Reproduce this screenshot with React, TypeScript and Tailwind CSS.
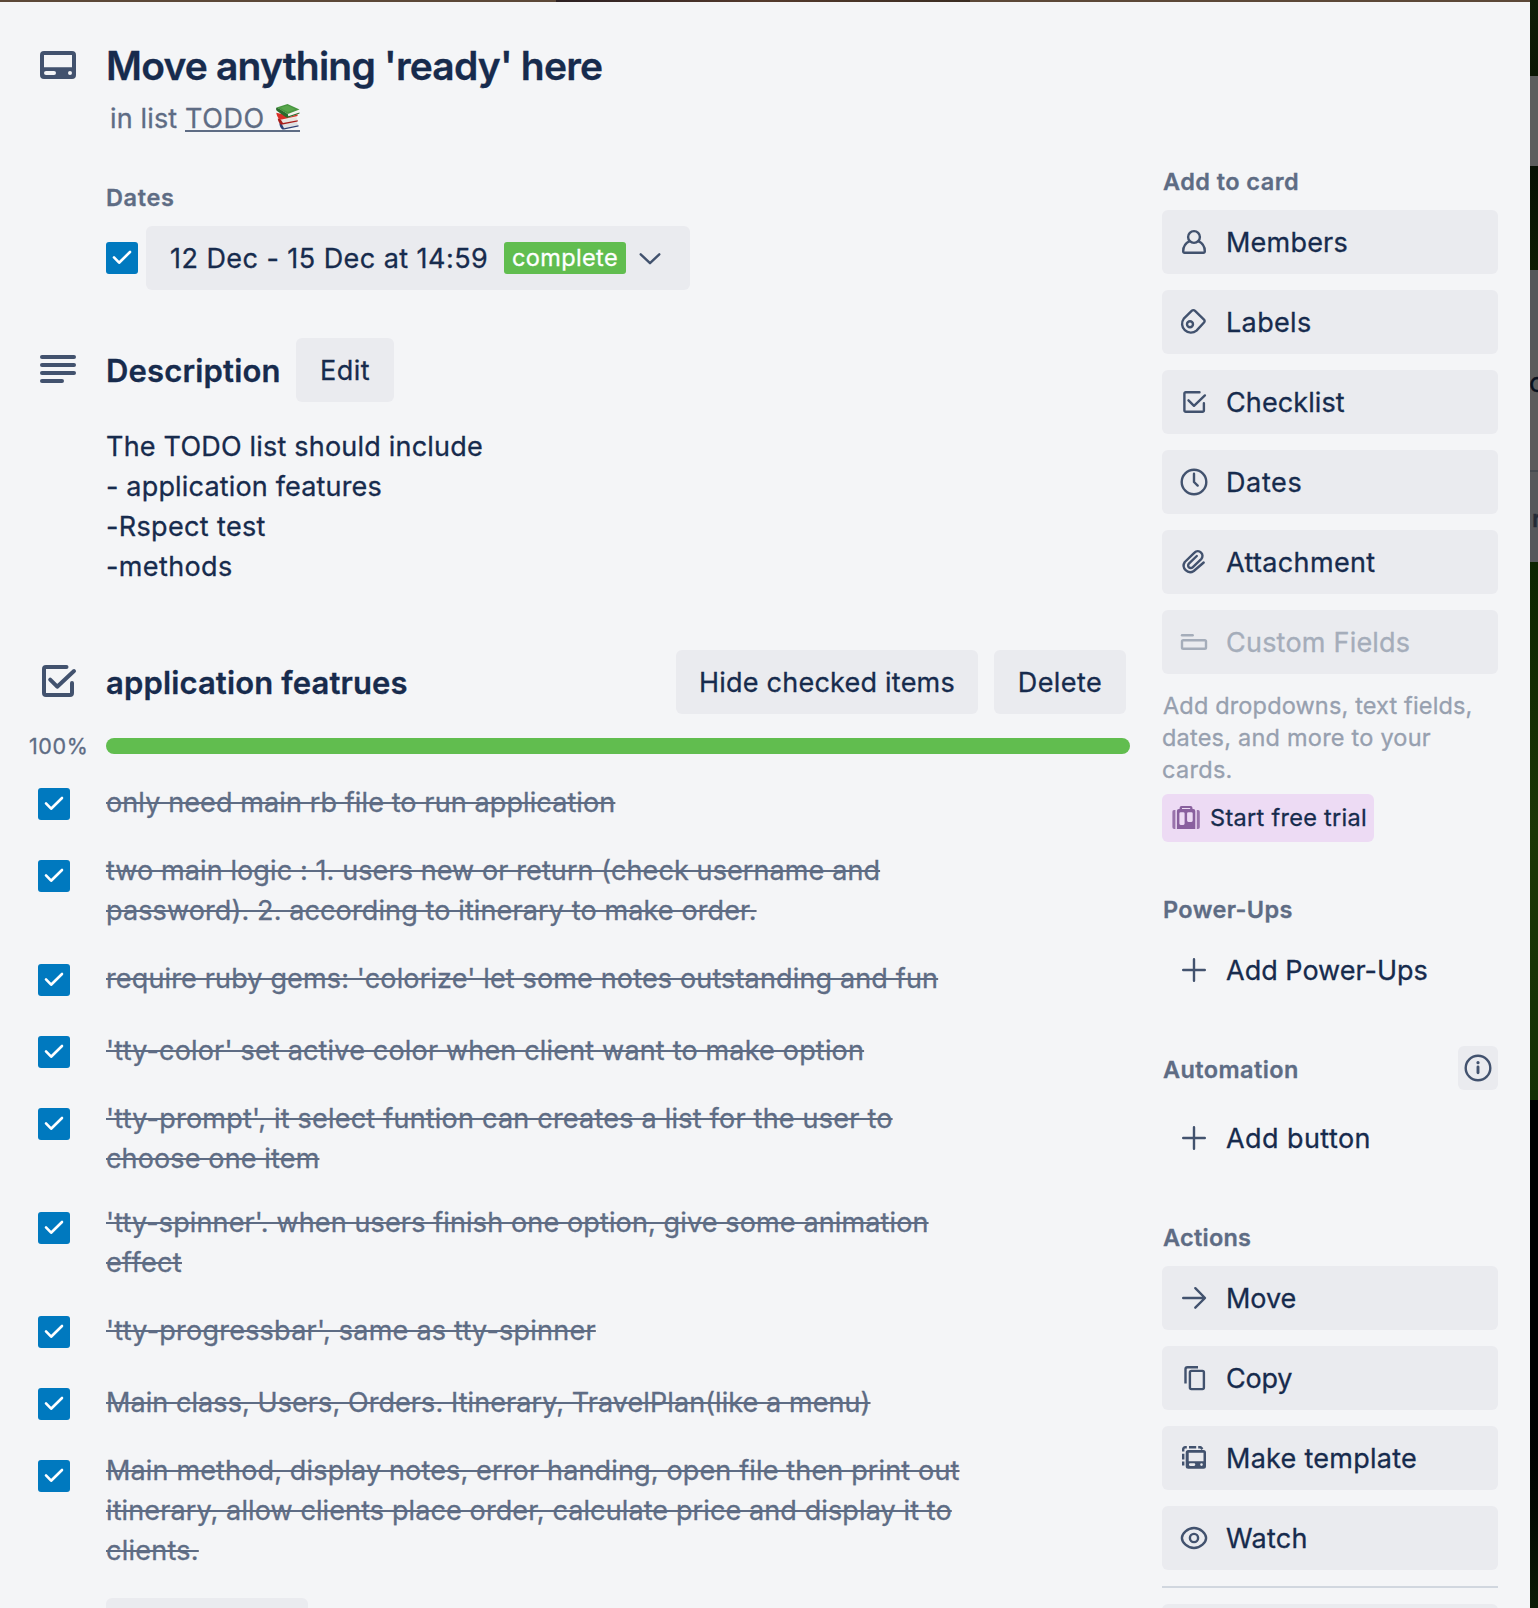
import React from "react";

type IconName =
  | "member" | "label" | "checklist" | "clock" | "attachment" | "fields"
  | "plus" | "arrow" | "copy" | "template" | "eye" | "info";

const glyphs: Record<IconName, React.ReactNode> = {
  member: (
    <>
      <circle cx="16" cy="11" r="5.9" />
      <path d="M11.6 15.2C7.8 17 5.2 21 5.2 25.3a1.4 1.4 0 0 0 1.4 1.5h18.8a1.4 1.4 0 0 0 1.4-1.5c0-4.300-2.600-8.300-6.400-10.100" />
    </>
  ),
  label: (
    <>
      <path d="M13.900 4.700a2 2 0 0 1 2.900 0l9.200 8.900a2 2 0 0 1 0 2.900l-7.500 8.100A8.800 8.800 0 0 1 5.800 12.600Z" />
      <circle cx="12" cy="18.300" r="3" />
    </>
  ),
  checklist: (
    <>
      <path d="M21.500 6.300H7.700a1.300 1.300 0 0 0-1.300 1.300v16.900a1.300 1.300 0 0 0 1.300 1.300h16.900a1.300 1.300 0 0 0 1.300-1.300V17.300" />
      <path d="M10.500 14.300l5.500 5.500L26.900 9.400" />
    </>
  ),
  clock: (
    <>
      <circle cx="16" cy="16" r="12.300" />
      <path d="M16 7.800V16l3.700 3.600" />
    </>
  ),
  attachment: (
    <path d="M25.700 16.500L15.800 25A6.500 6.500 0 0 1 6.800 16l9.700-9.300a4.600 4.600 0 0 1 6.700 6.400l-8.600 8.200a2.600 2.600 0 0 1-3.700-3.700l7.900-7.600" />
  ),
  fields: (
    <>
      <path d="M4 9.300h10.700" />
      <rect x="4" y="14.300" width="24" height="8.400" rx="1.300" />
    </>
  ),
  plus: <path d="M5.200 16h21.600M16 5.200v21.600" />,
  arrow: <path d="M5.200 16h21.300M17.300 6.200L27 16l-9.700 9.700" />,
  copy: (
    <>
      <path strokeLinecap="butt" d="M20 5.200H9.500a2 2 0 0 0-2 2V21.500" />
      <rect x="11.900" y="8.900" width="14" height="18.200" rx="1.500" />
    </>
  ),
  template: (
    <>
      <path strokeLinecap="butt" d="M5.200 9.500V7.200a2 2 0 0 1 2-2H8.800M11 5.200h7.200M20.200 5.200h2.300l2 2M5.200 11.700v5.800M5.200 19.500v4" />
      <path
        stroke="none" fill="currentColor" fillRule="evenodd"
        d="M10.200 8h15.300a2.500 2.500 0 0 1 2.500 2.500v13.700a2.500 2.500 0 0 1-2.500 2.500H10.200a2.500 2.500 0 0 1-2.500-2.500V10.500A2.500 2.500 0 0 1 10.200 8ZM10.700 10.700v8.500h14.800v-8.500ZM12.200 21.300a1.300 1.300 0 0 0 0 2.600h3.800a1.300 1.300 0 0 0 0-2.600ZM23.500 21.300a1.300 1.300 0 0 0 0 2.600a1.300 1.300 0 0 0 0-2.600Z"
      />
    </>
  ),
  eye: (
    <>
      <path d="M16 6C9.500 6 3.900 11.600 3.900 16S9.500 26 16 26s12.100-5.600 12.100-10S22.500 6 16 6Z" />
      <circle cx="16" cy="16" r="4.100" />
    </>
  ),
  info: (
    <>
      <circle cx="16" cy="16" r="12.300" />
      <path d="M16 15v5.800" strokeWidth="2.900" />
      <circle cx="16" cy="10.700" r="1.600" stroke="none" fill="currentColor" />
    </>
  ),
};

function Icon({ name }: { name: IconName }) {
  return (
    <svg
      className="size-8 shrink-0" viewBox="0 0 32 32" fill="none" stroke="currentColor"
      strokeWidth="2.400" strokeLinecap="round" strokeLinejoin="round"
    >
      {glyphs[name]}
    </svg>
  );
}

function Checkbox() {
  return (
    <span className="flex size-8 shrink-0 rounded-[3px] bg-[#0079bf]">
      <svg className="size-8" viewBox="0 0 32 32" fill="none" stroke="#fff" strokeWidth="2.600" strokeLinecap="round" strokeLinejoin="round">
        <path d="M8 15.400l5.100 5.300L24 10" />
      </svg>
    </span>
  );
}

function SideButton({ icon, label, track, tone }: { icon: IconName; label: string; track: string; tone?: "plain" | "disabled" }) {
  const look =
    tone === "plain" ? "text-[#42526e]" : tone === "disabled" ? "bg-[#eaebef] text-[#a5adba]" : "bg-[#eaebef] text-[#42526e]";
  return (
    <button className={`flex h-16 w-full items-center gap-4 rounded-[6px] pl-4 ${look}`}>
      <Icon name={icon} />
      <span className={`whitespace-nowrap pt-[2px] text-[27px] leading-10 ${track} ${tone === "disabled" ? "text-[#a5adba]" : "text-[#172b4d]"}`}>{label}</span>
    </button>
  );
}

function SideHeading({ children, track }: { children: React.ReactNode; track: string }) {
  return <h3 className={`h-8 pl-px text-[23.5px] font-semibold leading-8 text-[#5e6c84] ${track}`}>{children}</h3>;
}

function Books() {
  return (
    <svg className="ml-[10px] mt-[4px] h-[27px] w-[26px] shrink-0" viewBox="0 0 26 27" role="img" aria-label="books">
      <path d="M5 20.500l16-2.500 2.500 4.500L9 26Z" fill="#dfe0e3" />
      <path d="M4.500 20c-.3 2 .8 4.500 2.300 6 .6.600 1.400.7 2.200.5L23.500 23.600v-1.300L9 25.200 6.500 20.500Z" fill="#2c3f74" />
      <path d="M3 15.500l18-2 2 4.500L7 21.500Z" fill="#e9e4e0" />
      <path d="M2.800 15.500c0 1.800 1 4 2.400 5.500.7.700 1.500.8 2.500.600l15-3v-1.400L8 20 5 15.500Z" fill="#a81d1a" />
      <path d="M1.500 10.500L20 9.500l2 4.500-14.500 3.500Z" fill="#f0ebe6" />
      <path d="M1.300 9.700c.2 2 1.200 4.400 2.800 6.100.7.800 1.600.9 2.600.7L22.600 13l-.3-3-8.300 2.800Z" fill="#d92f27" />
      <path d="M12.500 11.500L24 7.300l.3 3.300-10.800 4Z" fill="#f4f3ee" />
      <path d="M1.500 4.600C.7 6 1 7 2 8l8.500 6c1 .7 2 .8 3 .4L24.500 10.600V9.500L13.300 13.200 12.800 11 4 5.500Z" fill="#2a6b2c" />
      <path d="M1.600 4.500L12.500 1l12 5.500L12.800 11Z" fill="#489640" />
      <path d="M5 4.800l7.500-2.300 8 3.800-7.700 2.700Z" fill="#58a64b" />
    </svg>
  );
}

const items: [string, string][][] = [
  [["only need main rb file to run application", "tracking-[0.11px]"]],
  [
    ["two main logic : 1. users new or return (check username and", "tracking-[0.102px]"],
    ["password). 2. according to itinerary to make order.", "tracking-[0.12px]"],
  ],
  [["require ruby gems: 'colorize' let some notes outstanding and fun", "tracking-[0.15px]"]],
  [["'tty-color' set active color when client want to make option", "tracking-[0.179px]"]],
  [
    ["'tty-prompt', it select funtion can creates a list for the user to", "tracking-[0.22px]"],
    ["choose one item", "tracking-[0.14px]"],
  ],
  [
    ["'tty-spinner'. when users finish one option, give some animation", "tracking-[0.13px]"],
    ["effect", "tracking-[0.35px]"],
  ],
  [["'tty-progressbar', same as tty-spinner", "tracking-[0.23px]"]],
  [["Main class, Users, Orders. Itinerary, TravelPlan(like a menu)", "tracking-[0.075px]"]],
  [
    ["Main method, display notes, error handing, open file then print out", "tracking-[0.15px]"],
    ["itinerary, allow clients place order, calculate price and display it to", "tracking-[0.112px]"],
    ["clients.", "tracking-[0.25px]"],
  ],
];

export default function App() {
  return (
    <div className="flex h-[1608px] w-[1538px] overflow-hidden bg-black font-['Inter',sans-serif] [-webkit-text-stroke:0.3px]">
      <div className="flex w-[1530px] shrink-0 flex-col bg-[#f4f5f7] text-[#172b4d]">
        <div className="flex h-[2px] shrink-0 bg-[#5c4838]">
          <div className="ml-[556px] w-[414px] bg-linear-to-r from-[#2c2022] via-[#543a2c] to-[#3a2c22]" />
        </div>

        <header className="flex h-[136px] shrink-0 pt-10">
          <div className="w-[106px] shrink-0 pl-10 pt-[9px]">
            <svg className="h-7 w-9" viewBox="0 0 36 28">
              <path
                fill="#42526e" fillRule="evenodd"
                d="M4 0h28a4 4 0 0 1 4 4v20a4 4 0 0 1-4 4H4a4 4 0 0 1-4-4V4a4 4 0 0 1 4-4ZM4 4v12.200h28V4ZM6 20a2 2 0 0 0 0 4h8a2 2 0 0 0 0-4ZM30 20a2 2 0 0 0 0 4a2 2 0 0 0 0-4Z"
              />
            </svg>
          </div>
          <div>
            <h1 className="h-12 text-[39px] font-semibold leading-[48px] tracking-[-0.805px]">Move anything 'ready' here</h1>
            <div className="mt-[9px] flex h-10 pl-1 text-[27px] leading-10 text-[#5e6c84]">
              <span className="w-[75px] tracking-[0.15px]">in list</span>
              <a className="flex h-[33px] w-[115px] border-b-2 border-[#5e6c84] tracking-[0.58px]">
                TODO
                <Books />
              </a>
            </div>
          </div>
        </header>

        <div className="flex">
          <main className="w-[1162px] shrink-0">
            <section className="pl-[106px] pt-11">
              <h3 className="h-8 text-[23.5px] font-semibold leading-8 tracking-[0.64px] text-[#5e6c84]">Dates</h3>
              <div className="mt-3 flex items-center gap-2">
                <Checkbox />
                <button className="flex h-16 w-[544px] items-center rounded-[6px] bg-[#eaebef] pl-6">
                  <span className="w-[334px] whitespace-nowrap pt-[2px] text-left text-[27px] leading-10 tracking-[0.446px]">12 Dec - 15 Dec at 14:59</span>
                  <span className="flex h-8 w-[122px] items-center justify-center rounded-[3px] bg-[#61bd4f] text-[23.5px] leading-8 tracking-[0.36px] text-white">complete</span>
                  <svg className="ml-3 h-4 w-6" viewBox="0 0 24 16" fill="none" stroke="#42526e" strokeWidth="2.400" strokeLinecap="round" strokeLinejoin="round">
                    <path d="M2.700 4.300L12 13.200l9.300-8.900" />
                  </svg>
                </button>
              </div>
            </section>

            <section className="mt-12">
              <div className="flex h-16 items-center">
                <div className="w-[106px] pb-[2px] pl-10">
                  <svg className="h-7 w-9" viewBox="0 0 36 28" fill="#42526e">
                    <rect width="36" height="4" rx="2" />
                    <rect y="8" width="36" height="4" rx="2" />
                    <rect y="16" width="36" height="4" rx="2" />
                    <rect y="24" width="24" height="4" rx="2" />
                  </svg>
                </div>
                <h2 className="w-[190px] pt-px text-[31px] font-semibold leading-8 tracking-[0.17px]">Description</h2>
                <button className="h-16 w-[98px] rounded-[6px] bg-[#eaebef] pt-[2px] text-[27px] tracking-[0.5px]">Edit</button>
              </div>
              <div className="mt-[25px] pl-[106px] text-[27px] leading-10">
                <p className="tracking-[0.205px]">The TODO list should include</p>
                <p className="tracking-[0.172px]">- application features</p>
                <p className="tracking-[0.35px]">-Rspect test</p>
                <p className="tracking-[0.381px]">-methods</p>
              </div>
            </section>

            <section className="mt-[63px]">
              <div className="flex h-16 items-center pr-9">
                <div className="w-[106px] pl-[42px]">
                  <svg className="size-9" viewBox="0 0 36 36" fill="none" stroke="#42526e" strokeWidth="4" strokeLinecap="round" strokeLinejoin="round">
                    <path d="M24.500 3H4a2 2 0 0 0-2 2v24a2 2 0 0 0 2 2h24a2 2 0 0 0 2-2V19" />
                    <path d="M8.200 15.700l7 7L32 7" />
                  </svg>
                </div>
                <h2 className="pt-px text-[31px] font-semibold leading-8 tracking-[0.137px]">application featrues</h2>
                <button className="ml-auto h-16 w-[302px] rounded-[6px] bg-[#eaebef] pt-[2px] text-[27px] tracking-[0.229px]">Hide checked items</button>
                <button className="ml-4 h-16 w-[132px] rounded-[6px] bg-[#eaebef] pt-[2px] text-[27px] tracking-[0.45px]">Delete</button>
              </div>
              <div className="mt-4 flex h-8 items-center">
                <span className="w-[106px] pl-[29px] text-[21.5px] leading-8 tracking-[0.6px] text-[#5e6c84]">100%</span>
                <div className="h-4 w-[1024px] rounded-full bg-[#61bd4f]" />
              </div>
              <ul className="mt-1">
                {items.map((lines, i) => (
                  <li key={i} className="flex min-h-[72px]">
                    <div className="w-[106px] shrink-0 pl-[38px] pt-[22px]">
                      <Checkbox />
                    </div>
                    <div className="self-center pb-[11px] pt-[13px] text-[27px] leading-10 text-[#5e6c84]">
                      {lines.map(([text, track]) => (
                        <p key={text} className={`whitespace-nowrap line-through decoration-2 ${track}`}>{text}</p>
                      ))}
                    </div>
                  </li>
                ))}
              </ul>
              <button className="ml-[106px] mt-4 block h-16 w-[202px] rounded-[6px] bg-[#eaebef]" />
            </section>
          </main>

          <aside className="w-[336px] shrink-0 pt-7">
            <SideHeading track="tracking-[0.44px]">Add to card</SideHeading>
            <div className="mt-3 flex flex-col gap-4">
              <SideButton icon="member" label="Members" track="tracking-[0.213px]" />
              <SideButton icon="label" label="Labels" track="tracking-[0.352px]" />
              <SideButton icon="checklist" label="Checklist" track="tracking-[0.1px]" />
              <SideButton icon="clock" label="Dates" track="tracking-[0.636px]" />
              <SideButton icon="attachment" label="Attachment" track="tracking-[0.35px]" />
              <SideButton icon="fields" label="Custom Fields" track="tracking-[0.22px]" tone="disabled" />
            </div>
            <p className="mt-4 whitespace-nowrap text-[23.5px] leading-8 text-[#97a0af]">
              <span className="block pl-px tracking-[0.15px]">Add dropdowns, text fields,</span>
              <span className="block tracking-[0.22px]">dates, and more to your</span>
              <span className="block tracking-[0.3px]">cards.</span>
            </p>
            <button className="mt-2 flex h-12 w-[212px] items-center rounded-[6px] bg-[#eddbf4] pl-2">
              <svg className="size-8" viewBox="0 0 32 32" fill="#89609e">
                <path d="M4 8h1.400v19H4.200A1.800 1.800 0 0 1 2.400 25.200V9.800A1.800 1.800 0 0 1 4 8ZM26.800 8h1.200a1.800 1.800 0 0 1 1.800 1.800v15.400a1.800 1.800 0 0 1-1.800 1.800h-1.200Z" opacity=".85" />
                <path
                  fillRule="evenodd"
                  d="M11.500 4h9a2 2 0 0 1 2 2v1h.8a2 2 0 0 1 2 2v18H6.900V9a2 2 0 0 1 2-2h.7V6a2 2 0 0 1 1.900-2ZM12 6v1h8.200V6ZM10.700 10.300a1.300 1.300 0 0 0-1.300 1.300v10a1.300 1.300 0 0 0 1.300 1.300h2.600a1.300 1.300 0 0 0 1.300-1.300v-10a1.300 1.300 0 0 0-1.300-1.300ZM18.400 10.300a1.300 1.300 0 0 0-1.300 1.300v7a1.300 1.300 0 0 0 1.300 1.300h3a1.300 1.300 0 0 0 1.300-1.300v-7a1.300 1.300 0 0 0-1.300-1.300Z"
                />
              </svg>
              <span className="ml-2 whitespace-nowrap text-[23.5px] leading-8 tracking-[0.3px]">Start free trial</span>
            </button>

            <div className="mt-[52px]">
              <SideHeading track="tracking-[0.37px]">Power-Ups</SideHeading>
              <div className="mt-3">
                <SideButton icon="plus" label="Add Power-Ups" track="tracking-[0px]" tone="plain" />
              </div>
            </div>

            <div className="mt-11">
              <div className="flex h-11 justify-between">
                <div className="pt-2">
                  <SideHeading track="tracking-[0.41px]">Automation</SideHeading>
                </div>
                <button className="flex h-11 w-10 items-center justify-center rounded-[6px] bg-[#eaebef] text-[#42526e]">
                  <Icon name="info" />
                </button>
              </div>
              <div className="mt-4">
                <SideButton icon="plus" label="Add button" track="tracking-[0.42px]" tone="plain" />
              </div>
            </div>

            <div className="mt-[52px]">
              <SideHeading track="tracking-[0.26px]">Actions</SideHeading>
              <div className="mt-3 flex flex-col gap-4">
                <SideButton icon="arrow" label="Move" track="tracking-[-0.066px]" />
                <SideButton icon="copy" label="Copy" track="tracking-[-0.2px]" />
                <SideButton icon="template" label="Make template" track="tracking-[0.262px]" />
                <SideButton icon="eye" label="Watch" track="tracking-[0.25px]" />
                <hr className="h-[2px] border-0 bg-[#d1d7df]" />
                <div className="h-16 rounded-[6px] bg-[#eaebef]" />
              </div>
            </div>
          </aside>
        </div>
      </div>

      {/* Dimmed board showing beside the dialog */}
      <div className="flex h-full w-2 shrink-0 flex-col overflow-hidden">
        <div className="h-[76px] shrink-0 bg-linear-to-b from-[#0f1d06] to-[#0c1704]" />
        <div className="h-[90px] shrink-0 bg-[#5d5d5d]" />
        <div className="h-[104px] shrink-0 bg-linear-to-b from-[#061002] via-[#0a1603] to-[#0e1d02]" />
        <div className="h-20 shrink-0 bg-[#55575a]" />
        <div className="h-[120px] shrink-0 overflow-hidden bg-[#5c5c5c] pt-[13px] text-[27px] leading-10 text-[#08101d]">
          <span className="-ml-px">o</span>
        </div>
        <div className="h-[2px] shrink-0 bg-[#464a50]" />
        <div className="h-[90px] shrink-0 overflow-hidden bg-[#56585b] pl-[2px] pt-[31px] text-[23px] font-semibold leading-8 text-[#232a35]">r</div>
        <div className="h-[538px] shrink-0 bg-linear-to-b from-[#0c2400] via-[#1c3606] to-[#143006]" />
        <div className="grow bg-linear-to-b from-black via-black to-[#0c1c06]" />
      </div>
    </div>
  );
}
